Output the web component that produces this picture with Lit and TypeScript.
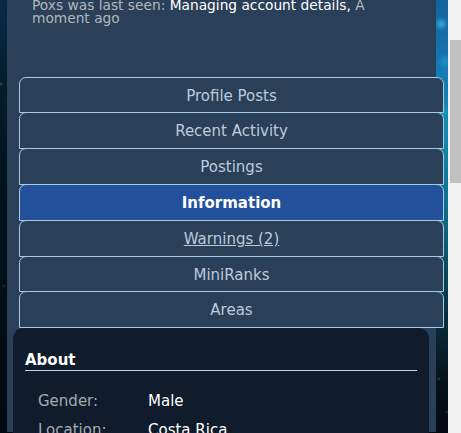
import { LitElement, css, html } from 'lit';
import { customElement } from 'lit/decorators.js';

const tabs = ['Profile Posts', 'Recent Activity', 'Postings', 'Information', 'Warnings (2)', 'MiniRanks', 'Areas'];
const about = [['Gender:', 'Male'], ['Location:', 'Costa Rica']];

@customElement('app-root')
export class AppRoot extends LitElement {
  static styles = css`
    :host {
      display: flex;
      height: 433px;
      overflow: hidden;
      font-family: "DejaVu Sans", Verdana, sans-serif;
      font-size: 13.75px;
      background: #f1f1f1;
    }
    .page {
      width: 448px;
      height: 433px;
      overflow: hidden;
      padding-left: 7px;
      box-sizing: border-box;
      background:
        radial-gradient(circle at 441px 24px, #3aa8dc 0, transparent 7px),
        radial-gradient(circle at 445px 62px, #1f90c8 0, transparent 8px),
        radial-gradient(circle at 440px 110px, #16a8c8 0, transparent 10px),
        radial-gradient(circle at 439px 379px, #2a4650 0, transparent 2px),
        radial-gradient(circle at 447px 412px, #1f3038 0, transparent 2px),
        radial-gradient(circle at 1px 84px, #40586a 0, transparent 2px),
        radial-gradient(circle at 4px 286px, #1f3442 0, transparent 2px),
        linear-gradient(180deg, #0a2a4c 0, #04202f 70px, #02141f 160px, #010e16 300px, #000a10 433px) 0 0 / 7px 100% no-repeat,
        linear-gradient(180deg, #13639c 0, #1478b4 70px, #0f8cb0 130px, #0c6a84 220px, #08303f 310px, #050f16 390px, #030a0f 433px);
    }
    .panel {
      width: 429px;
      height: 433px;
      background: #2a3f58;
    }
    .seen {
      margin: 0;
      padding: 0 0 0 25px;
      width: 345px;
      line-height: 13px;
      color: #b4b8bd;
      height: 76px;
      margin-top: -1px;
    }
    .seen b {
      font-weight: normal;
      color: #fff;
    }
    .tabs {
      display: flex;
      flex-direction: column;
      width: 425px;
      margin-left: 12px;
      margin-top: 1.6px;
    }
    .tab {
      height: 36.8px;
      margin-bottom: -1px;
      padding-top: 1.3px;
      box-sizing: border-box;
      border: 1px solid #a6cbe6;
      border-radius: 7px 7px 0 0;
      background: #2a3f58;
      color: #bccbdd;
      font-size: 15px;
      display: flex;
      align-items: center;
      justify-content: center;
    }
    .tab.active {
      background: #22509a;
      color: #fff;
      font-weight: bold;
    }
    .tab.link span {
      text-decoration: underline;
    }
    .about {
      margin: 1px 0 0 6px;
      width: 416px;
      height: 120px;
      box-sizing: border-box;
      padding: 23px 12px 0;
      background: #101c2b;
      border-radius: 10px 10px 0 0;
      color: #fff;
    }
    .about h3 {
      margin: 0 0 21px;
      font-size: 15px;
      line-height: 19px;
      border-bottom: 1px solid #c3d4e2;
    }
    .row {
      display: grid;
      grid-template-columns: 110px 1fr;
      padding-left: 13px;
      height: 29px;
      font-size: 15px;
      line-height: 18px;
    }
    .row span:first-child {
      color: #a5abb2;
    }
    .scroll {
      width: 13px;
      height: 433px;
      padding: 40px 0 0 2px;
      box-sizing: border-box;
    }
    .thumb {
      width: 11px;
      height: 143px;
      background: #c1c1c1;
    }
  `;

  render() {
    return html`
      <div class="page">
        <div class="panel">
          <p class="seen">Poxs was last seen: <b>Managing account details,</b> A moment ago</p>
          <div class="tabs">
            ${tabs.map((t) => html`
              <div class="tab ${t === 'Information' ? 'active' : ''} ${t.startsWith('Warnings') ? 'link' : ''}">
                <span>${t}</span>
              </div>
            `)}
          </div>
          <div class="about">
            <h3>About</h3>
            ${about.map(([k, v]) => html`<div class="row"><span>${k}</span><span>${v}</span></div>`)}
          </div>
        </div>
      </div>
      <div class="scroll"><div class="thumb"></div></div>
    `;
  }
}
